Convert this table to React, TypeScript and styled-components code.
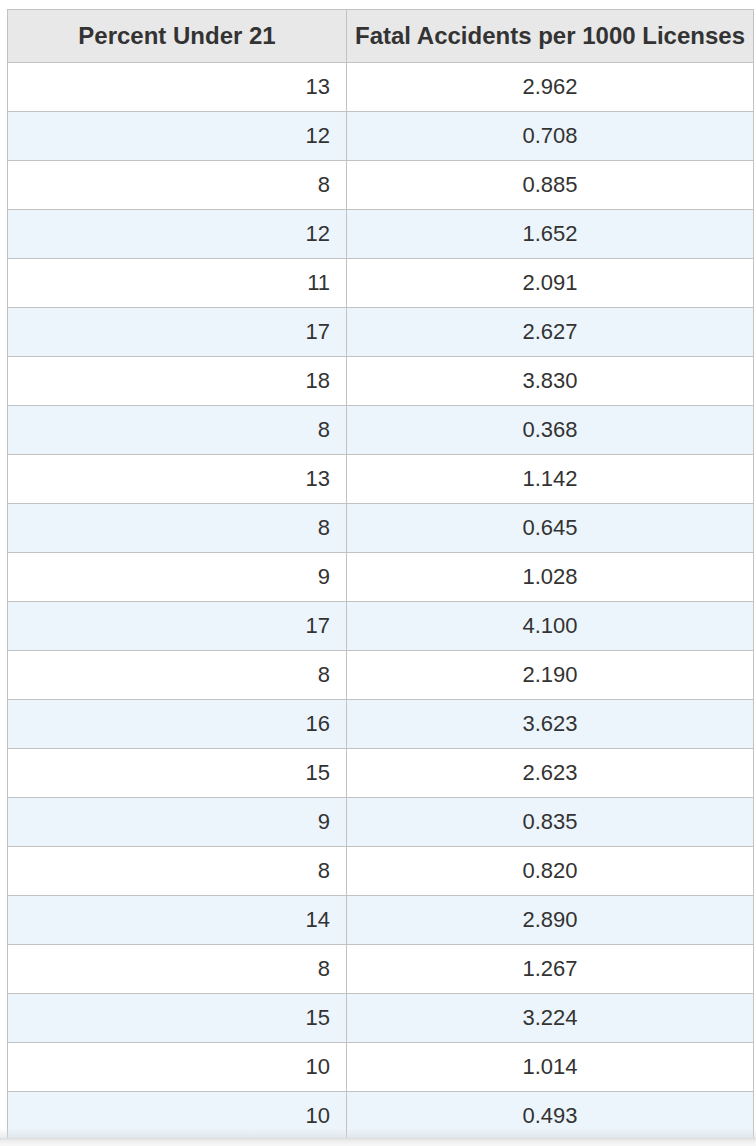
import React from 'react';
import styled, { createGlobalStyle } from 'styled-components';

const rows: [number, string][] = [
    [13, '2.962'],
    [12, '0.708'],
    [8, '0.885'],
    [12, '1.652'],
    [11, '2.091'],
    [17, '2.627'],
    [18, '3.830'],
    [8, '0.368'],
    [13, '1.142'],
    [8, '0.645'],
    [9, '1.028'],
    [17, '4.100'],
    [8, '2.190'],
    [16, '3.623'],
    [15, '2.623'],
    [9, '0.835'],
    [8, '0.820'],
    [14, '2.890'],
    [8, '1.267'],
    [15, '3.224'],
    [10, '1.014'],
    [10, '0.493'],
];

const GlobalStyle = createGlobalStyle`
    html, body {
        margin: 0;
        padding: 0;
        background: #ffffff;
    }
`;

const Page = styled.div`
    width: 756px;
    height: 1146px;
    display: flex;
    flex-direction: column;
    font-family: "Liberation Sans", Arial, Helvetica, sans-serif;
    color: #333333;
`;

const Scroller = styled.div`
    position: relative;
    height: 1138px;
    overflow: hidden;
    padding: 9px 0 0 7px;
    box-sizing: border-box;
`;

// soft shadow where the scroll area cuts the table off
const Fade = styled.div`
    position: absolute;
    left: 0;
    right: 0;
    bottom: 0;
    height: 10px;
    background: linear-gradient(to bottom, rgba(220, 224, 228, 0) 0%, rgba(214, 218, 222, 0.55) 100%);
`;

const BottomBar = styled.div`
    height: 8px;
    background: linear-gradient(to bottom, #dcdcdc 0%, #efefef 40%, #f7f7f7 100%);
`;

const Table = styled.table`
    border-collapse: collapse;
    table-layout: fixed;
    width: 744px;
`;

const Head = styled.th<{ $w: number }>`
    width: ${(p) => p.$w}px;
    height: 52px;
    padding: 0;
    background: #e8e8e8;
    border: 1px solid #c2c2c2;
    font-size: 24px;
    font-weight: bold;
    text-align: center;
    white-space: nowrap;
    color: #333333;
`;

const Row = styled.tr<{ $alt: boolean }>`
    background: ${(p) => (p.$alt ? '#edf5fc' : '#ffffff')};
`;

const Cell = styled.td<{ $align: 'right' | 'center' }>`
    height: 48px;
    padding: ${(p) => (p.$align === 'right' ? '0 16px 0 0' : '0')};
    border: 1px solid #c2c2c2;
    font-size: 22px;
    text-align: ${(p) => p.$align};
`;

const App = () => {
    return (
        <Page>
            <GlobalStyle />
            <Scroller>
                <Table>
                    <thead>
                        <tr>
                            <Head $w={338}>Percent Under 21</Head>
                            <Head $w={406}>Fatal Accidents per 1000 Licenses</Head>
                        </tr>
                    </thead>
                    <tbody>
                        {rows.map(([pct, rate], i) => (
                            <Row key={i} $alt={i % 2 === 1}>
                                <Cell $align="right">{pct}</Cell>
                                <Cell $align="center">{rate}</Cell>
                            </Row>
                        ))}
                    </tbody>
                </Table>
                <Fade />
            </Scroller>
            <BottomBar />
        </Page>
    );
};

export default App;
